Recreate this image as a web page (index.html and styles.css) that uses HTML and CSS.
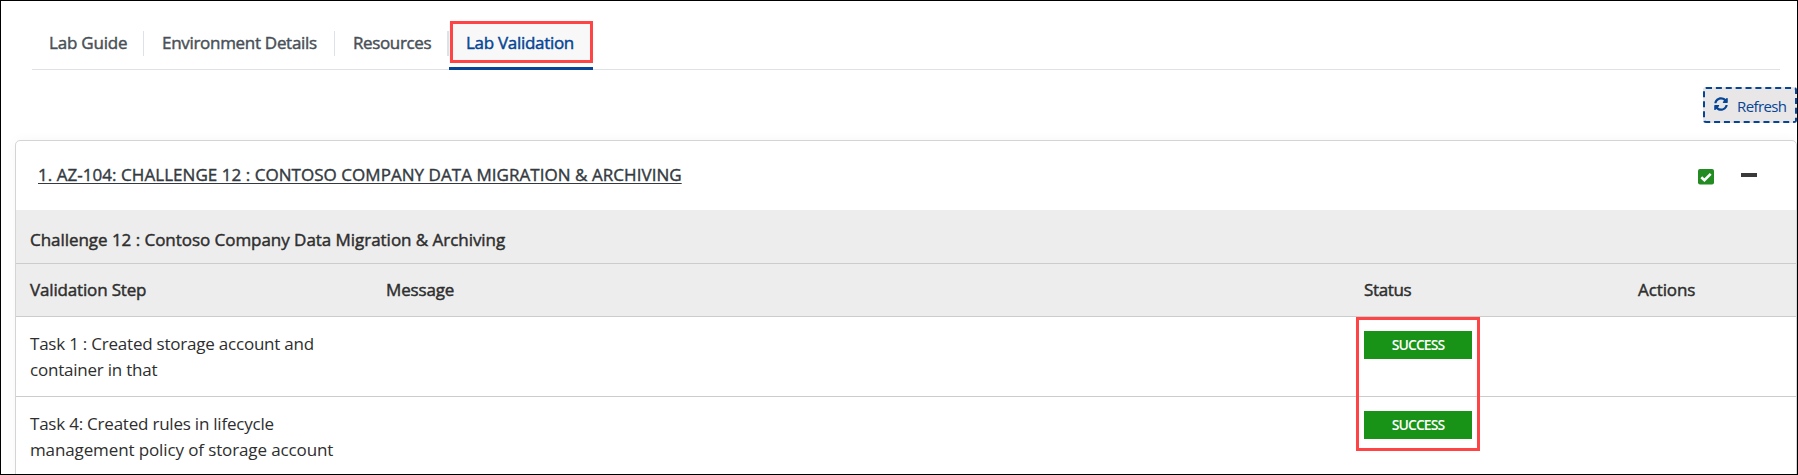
FILE: index.html
```html
<!DOCTYPE html>
<html lang="en">
<head>
<meta charset="utf-8">
<title>Lab Validation</title>
<link rel="stylesheet" href="styles.css">
</head>
<body>
<nav class="tabs">
  <a class="tab tab-guide"><span>Lab Guide</span></a>
  <a class="tab tab-env"><span>Environment Details</span></a>
  <a class="tab tab-res"><span>Resources</span></a>
  <a class="tab tab-active"><span>Lab Validation</span></a>
</nav>
<div class="toolbar">
  <button class="refresh">
    <svg width="14" height="14" viewBox="0 0 512 512" fill="currentColor"><path d="M370.7 133.3C339.500 104 298.900 88 255.800 88c-77.500.1-144.300 53.200-162.800 126.900-1.300 5.400-6.100 9.200-11.700 9.200H24.100c-7.500 0-13.200-6.800-11.800-14.200C33.900 94.900 134.800 8 256 8c66.400 0 126.800 26.100 171.300 68.700L463 41C478.100 25.900 504 36.600 504 57.900V192c0 13.300-10.700 24-24 24H345.900c-21.400 0-32.100-25.900-17-41l41.800-41.700zM32 296h134.100c21.400 0 32.100 25.900 17 41l-41.800 41.800c31.300 29.300 71.800 45.300 114.900 45.300 77.400-.1 144.300-53.100 162.800-126.800 1.300-5.400 6.100-9.200 11.700-9.200h57.300c7.500 0 13.200 6.800 11.800 14.200C478.100 417.100 377.200 504 256 504c-66.400 0-126.800-26.100-171.300-68.700L49 471C33.900 486.100 8 475.400 8 454.100V320c0-13.300 10.700-24 24-24z"/></svg>
    <span>Refresh</span>
  </button>
</div>
<section class="card">
  <header class="card-head">
    <a class="card-title">1. AZ-104: CHALLENGE 12 : CONTOSO COMPANY DATA MIGRATION &amp; ARCHIVING</a>
    <svg class="check" width="16" height="16" viewBox="0 0 16 16"><rect width="16" height="15.500" rx="2" fill="#228b22"/><path d="M3.300 8.200 6.400 11.200 12.700 4.800" fill="none" stroke="#fff" stroke-width="2.600"/></svg>
    <span class="minus"></span>
  </header>
  <div class="group">Challenge 12 : Contoso Company Data Migration &amp; Archiving</div>
  <div class="row row-head">
    <span class="h-step">Validation Step</span><span class="h-msg">Message</span><span class="h-status">Status</span><span class="h-act">Actions</span>
  </div>
  <div class="row">
    <p class="step"><span class="l1">Task 1 : Created storage account and</span><br><span class="l2">container in that</span></p>
    <span></span>
    <span class="badge">SUCCESS</span>
  </div>
  <div class="row">
    <p class="step"><span class="l3">Task 4: Created rules in lifecycle</span><br><span class="l4">management policy of storage account</span></p>
    <span></span>
    <span class="badge">SUCCESS</span>
  </div>
</section>
<div class="mark mark-tab"></div>
<div class="mark mark-status"></div>
</body>
</html>
```
FILE: styles.css
```css
* { box-sizing: border-box; }
body {
  position: relative;
  margin: 0;
  height: 475px;
  overflow: hidden;
  border: 1px solid #000;
  background: #fff;
  color: #2e2e2e;
  font: 17px/26px "Open Sans", "Noto Sans", sans-serif;
}
.tabs {
  display: flex;
  align-items: flex-start;
  height: 69px;
  margin: 0 17px 0 31px;
  padding-top: 20px;
  border-bottom: 1px solid #dee2e6;
}
.tab {
  position: relative;
  height: 49px;
  padding: 9px 0 0 17px;
  color: #495057;
  letter-spacing: -.3px;
  -webkit-text-stroke: .45px;
  white-space: nowrap;
}
.tab::after {
  content: "";
  position: absolute;
  top: 10px;
  right: 0;
  width: 1px;
  height: 25px;
  background: #dee2e6;
}
.tab-guide { width: 112px; letter-spacing: -.2px; }
.tab-env { width: 191px; padding-left: 18px; }
.tab-res { width: 114px; padding-left: 18px; letter-spacing: -.38px; }
.tab-res::after { width: 2px; }
.tab-active {
  width: 144px;
  background: linear-gradient(#f8f8f8 0 42px, #fff 42px);
  border-bottom: 3px solid #064595;
  color: #064595;
}
.tab-active::after { display: none; }
.toolbar {
  display: flex;
  justify-content: flex-end;
  padding-top: 17px;
}
.refresh {
  display: flex;
  align-items: center;
  gap: 9px;
  width: 94px;
  height: 36px;
  padding: 1px 0 0 9px;
  border: 2px dashed #064595;
  border-radius: 3px;
  background: #e8e6e6;
  color: #064595;
  font: 15px/22px "Open Sans", sans-serif;
  letter-spacing: -.6px;
}
.refresh svg { flex: none; margin-top: -3px; }
.card {
  margin: 17px 0 0 14px;
  height: 340px;
  border: 1px solid #d4d4d4;
  border-radius: 5px;
  box-shadow: 0 0 12px rgba(0, 0, 0, .04);
}
.card-head {
  display: flex;
  height: 69px;
  padding: 21px 39px 0 22px;
}
.card-title {
  margin-right: auto;
  letter-spacing: .045px;
  -webkit-text-stroke: .4px;
  color: #343a40;
  text-decoration: underline 1px;
  text-underline-offset: 2px;
  white-space: nowrap;
}
.check { margin-top: 7px; }
.minus {
  width: 16px;
  height: 4px;
  margin: 11px 0 0 27px;
  background: #3a3a3a;
}
.group {
  height: 54px;
  padding: 17px 14px 0;
  background: #ededed;
  border-bottom: 1px solid #ccc;
  letter-spacing: -.04px;
  -webkit-text-stroke: .45px;
}
.row {
  display: grid;
  grid-template-columns: 356px 978px 274px 1fr;
  height: 80px;
  padding: 14px 0 0 14px;
  border-bottom: 1px solid #ccc;
  white-space: nowrap;
}
.row-head {
  height: 53px;
  padding-top: 13px;
  background: #ededed;
  letter-spacing: -.16px;
  -webkit-text-stroke: .45px;
}
.h-status { letter-spacing: -.35px; }
.h-act { letter-spacing: -.1px; }
.step { margin: 0; }
.l1, .l2, .l3 { letter-spacing: -.22px; }
.l4 { letter-spacing: -.12px; }
.badge {
  width: 108px;
  height: 28px;
  background: #189318;
  color: #fff;
  font-size: 14px;
  font-weight: 600;
  letter-spacing: -.9px;
  line-height: 28px;
  text-align: center;
}
.mark {
  position: absolute;
  border: 3px solid #fe4444;
}
.mark-tab { left: 449px; top: 20px; width: 143px; height: 42px; }
.mark-status { left: 1355px; top: 316px; width: 124px; height: 134px; }
```
